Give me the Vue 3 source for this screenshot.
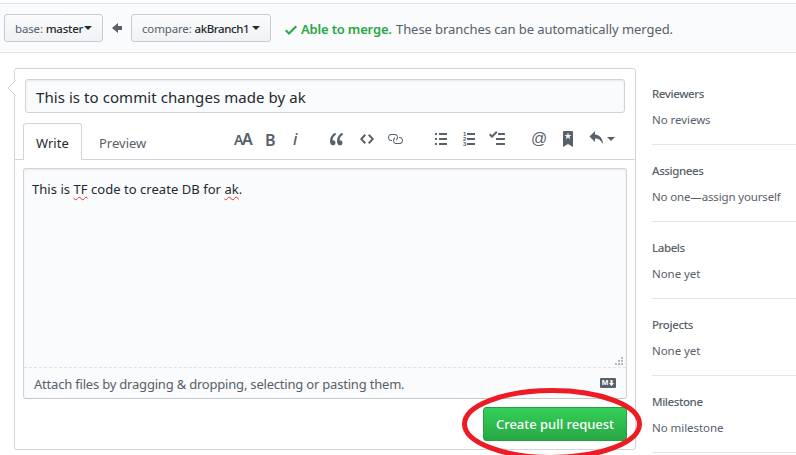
<script setup>
const sections = [
  { title: 'Reviewers', text: 'No reviews', cls: 'reviewers' },
  { title: 'Assignees', text: 'No one—assign yourself', cls: 'assignees' },
  { title: 'Labels', text: 'None yet', cls: 'labels' },
  { title: 'Projects', text: 'None yet', cls: 'projects' },
  { title: 'Milestone', text: 'No milestone', cls: 'milestone' },
]
</script>

<template>
  <div class="page">
    <header class="range">
      <button class="branch base"><span class="t">base: <b>master</b></span><i class="caret"></i></button>
      <svg class="arrow" width="10" height="16" viewBox="0 0 10 16"><path d="M6 3L0 8l6 5v-3h4V6H6V3z" /></svg>
      <button class="branch compare"><span class="t">compare: <b>akBranch1</b></span><i class="caret"></i></button>
      <svg class="check" width="12" height="16" viewBox="0 0 12 16"><path d="M12 5l-8 8-4-4 1.5-1.5L4 10l6.5-6.5L12 5z" /></svg>
      <strong class="able">Able to merge.</strong>
      <span class="these">These branches can be automatically merged.</span>
    </header>

    <div class="columns">
      <main class="card">
        <svg class="pointer" width="9" height="16" viewBox="0 0 9 16"><path class="fill" d="M9 0L1 8l8 8z" /><path class="edge" d="M8.500 .5L1 8l7.500 7.500" /></svg>
        <div class="title-input"><span>This is to commit changes made by ak</span></div>

        <div class="tabbar">
          <div class="tab active"><span>Write</span></div>
          <div class="tab"><span>Preview</span></div>
          <div class="toolbar">
            <span class="aa"><small>A</small>A</span>
            <span class="bold">B</span>
            <span class="italic">i</span>
            <svg width="14" height="16" viewBox="0 0 14 16"><path d="M6.160 3.500C3.730 5.060 2.550 6.670 2.550 9.360c.16-.05.3-.05.44-.05 1.270 0 2.500.86 2.500 2.410 0 1.610-1.030 2.610-2.500 2.610-1.900 0-2.990-1.520-2.990-4.250 0-3.800 1.750-6.530 5.020-8.420L6.160 3.500zm7 0c-2.430 1.560-3.610 3.170-3.610 5.860.16-.05.3-.05.44-.05 1.270 0 2.500.86 2.500 2.410 0 1.610-1.030 2.610-2.500 2.610-1.890 0-2.980-1.520-2.980-4.250 0-3.800 1.750-6.530 5.020-8.420l1.140 1.840h-.01z" /></svg>
            <svg width="14" height="16" viewBox="0 0 14 16"><path d="M9.500 3L8 4.500 11.500 8 8 11.500 9.500 13 14 8 9.500 3zm-5 0L0 8l4.500 5L6 11.500 2.500 8 6 4.500 4.500 3z" /></svg>
            <svg class="link" width="16" height="16" viewBox="0 0 16 16"><path d="M4 9h1v1H4c-1.500 0-3-1.690-3-3.500S2.550 3 4 3h4c1.450 0 3 1.690 3 3.500 0 1.410-.91 2.720-2 3.250V8.590c.58-.45 1-1.270 1-2.090C10 5.220 8.980 4 8 4H4c-.98 0-2 1.220-2 2.500S3 9 4 9zm9-3h-1v1h1c1 0 2 1.220 2 2.500S13.980 12 13 12H9c-.98 0-2-1.220-2-2.500 0-.83.42-1.640 1-2.090V6.250c-1.090.53-2 1.840-2 3.250C6 11.310 7.550 13 9 13h4c1.450 0 3-1.690 3-3.500S14.500 6 13 6z" /></svg>
            <svg width="12" height="16" viewBox="0 0 12 16"><path d="M0 2h2v2H0zM0 7h2v2H0zM0 12h2v2H0zM4 2h8v2H4zM4 7h8v2H4zM4 12h8v2H4z" /></svg>
            <span class="ordered">
              <span class="nums"><span>1</span><span>2</span><span>3</span></span>
              <svg width="8" height="16" viewBox="0 0 8 16"><path d="M0 2h8v2H0zM0 7h8v2H0zM0 12h8v2H0z" /></svg>
            </span>
            <svg width="16" height="16" viewBox="0 0 16 16"><path d="M15.410 9H7.590C7 9 7 8.590 7 8c0-.59 0-1 .59-1h7.810c.59 0 .59.41.59 1 0 .59 0 1-.59 1h.01zM9.590 4C9 4 9 3.590 9 3c0-.59 0-1 .59-1h5.810c.59 0 .59.41.59 1 0 .59 0 1-.59 1H9.590zM0 3.910l1.410-1.300L3 4.200 7.090 0 8.500 1.410 3 6.910l-3-3zM7.590 12h7.810c.59 0 .59.41.59 1 0 .59 0 1-.59 1H7.590C7 14 7 13.590 7 13c0-.59 0-1 .59-1z" /></svg>
            <span class="at">@</span>
            <svg width="10" height="16" viewBox="0 0 10 16"><path d="M9 0H1C.27 0 0 .27 0 1v15l5-3.090L10 16V1c0-.73-.27-1-1-1zm-.78 4.250L6.360 5.610l.72 2.160c.06.22-.02.28-.2.17L5 6.600 3.120 7.940c-.19.11-.25.05-.2-.17l.72-2.160-1.860-1.360c-.17-.16-.14-.23.09-.23l2.300-.03.7-2.160h.25l.7 2.160 2.300.03c.23 0 .27.08.09.23h.01z" /></svg>
            <svg width="14" height="16" viewBox="0 0 14 16"><path d="M6 3.500c3.920.44 8 3.125 8 10-2.312-5.062-4.750-6-8-6V11L.5 5.500 6 0v3.500z" /></svg>
            <i class="caret"></i>
          </div>
        </div>

        <div class="editor">
          <div class="text">
            <span class="body-text">This is <span class="typo">TF</span> code to create DB for <span class="typo">ak</span>.</span>
            <svg class="grip" width="9" height="9" viewBox="0 0 9 9"><path d="M6 0h2v2H6zM3 3h2v2H3zM6 3h2v2H6zM0 6h2v2H0zM3 6h2v2H3zM6 6h2v2H6z" /></svg>
          </div>
          <div class="attach">
            <span class="attach-text">Attach files by dragging &amp; dropping, selecting or pasting them.</span>
            <span class="md">M<svg width="5" height="6" viewBox="0 0 5 6"><path d="M1.500 0h2v3H5L2.500 6 0 3h1.500z" /></svg></span>
          </div>
        </div>

        <div class="actions">
          <button class="create"><span>Create pull request</span></button>
          <svg class="ring" width="182" height="74" viewBox="0 0 182 74"><ellipse cx="91" cy="37" rx="87.500" ry="33.500" /></svg>
        </div>
      </main>

      <aside class="sidebar">
        <section v-for="s in sections" :key="s.title" :class="s.cls">
          <h3><span>{{ s.title }}</span></h3>
          <p><span>{{ s.text }}</span></p>
        </section>
      </aside>
    </div>
  </div>
</template>

<style>
body { margin: 0; background: #fff; }
</style>

<style scoped>
* { box-sizing: border-box; }
.page { width: 796px; height: 455px; overflow: hidden; padding-top: 3px; font-family: "Noto Sans", "Open Sans", sans-serif; color: #24292e; font-size: 13px; white-space: nowrap; }
button { font: inherit; padding: 0; margin: 0; }
svg { display: block; flex: none; fill: #586069; }
.caret { border: 4px solid transparent; border-top-color: currentColor; border-bottom: 0; width: 8px; height: 4px; }

.range { height: 50px; border: solid #e1e4e8; border-width: 1px 0; background: #fafbfc; display: flex; align-items: center; padding: 0 0 0 4px; }
.branch { height: 28px; display: flex; align-items: center; padding-left: 10px; border: 1px solid #c8cbcf; border-radius: 3px; background: linear-gradient(#fafbfc, #eff3f6); font-size: 11.5px; color: #586069; }
.branch .t { letter-spacing: -.15px; padding-top: 1px; }
.branch b { font-weight: 500; color: #24292e; letter-spacing: -.4px; }
.base b { letter-spacing: -.25px; }
.branch .caret { color: #24292e; margin-left: auto; margin-right: 10px; }
.base { width: 99px; }
.compare { width: 140px; }
.arrow { margin: 0 9px; }
.check { margin: 3px 4px 0 14px; fill: #28a745; }
.able { font-weight: 600; font-size: 13px; color: #28a745; width: 95px; letter-spacing: -.17px; padding-top: 1px; }
.these { color: #586069; font-size: 13px; letter-spacing: -.07px; padding-top: 1px; }

.columns { display: flex; padding: 15px 0 0 14px; }
.card { width: 622px; height: 382px; border: 1px solid #d1d5da; border-radius: 3px; position: relative; padding: 10px 0 0; flex: none; }
.pointer { position: absolute; left: -8px; top: 11px; }
.pointer .fill { fill: #fff; }
.pointer .edge { fill: none; stroke: #d1d5da; }
.title-input { margin-left: 10px; width: 600px; height: 34px; border: 1px solid #d1d5da; border-radius: 3px; background: #fafbfc; box-shadow: inset 0 1px 2px rgba(27, 31, 35, .075); padding-left: 10px; font-size: 15px; line-height: 34px; letter-spacing: .07px; }

.tabbar { display: flex; height: 37px; margin-top: 10px; border-bottom: 1px solid #d1d5da; padding-left: 8px; }
.tab { width: 59px; height: 37px; line-height: 40px; padding-left: 13px; color: #586069; }
.tab.active { background: #fff; border: 1px solid #d1d5da; border-bottom: 0; border-radius: 3px 3px 0 0; color: #24292e; padding-left: 12px; line-height: 38px; }
.tab + .tab { padding-left: 17px; }
.toolbar { margin: 7px 0 0 93px; height: 16px; display: grid; grid-template-columns: 32px 27px 37px 30px 28px 47px 28px 26px 43px 31px 26px 18px 8px; align-items: center; color: #586069; line-height: 16px; }
.aa { font-size: 16px; font-weight: 600; letter-spacing: -1.400px; padding-top: 1px; }
.aa small { font-size: 14px; }
.bold { font-size: 16px; font-weight: 600; margin-left: -1px; padding-top: 1px; }
.italic { font-size: 16px; font-weight: 500; font-style: italic; }
.link { margin-left: -1px; }
.at { font-size: 16px; font-family: "Liberation Sans", sans-serif; margin-left: -1px; }
.ordered { display: flex; gap: 1px; }
.nums { width: 3px; font: 700 6px/5px "Liberation Sans", sans-serif; display: flex; flex-direction: column; padding-top: 1px; }

.editor { margin: 8px 0 0 8px; width: 604px; height: 231px; border: 1px solid #d1d5da; border-bottom-color: #c3c8cf; border-radius: 3px; background: #fafbfc; box-shadow: inset 0 1px 2px rgba(27, 31, 35, .075); }
.text { height: 198px; padding: 10px 8px 0; line-height: 20px; font-size: 13px; display: flex; justify-content: space-between; position: relative; }
.body-text { letter-spacing: .04px; }
.typo { text-decoration: underline wavy #e03030 1px; text-underline-offset: 2px; text-decoration-skip-ink: none; }
.grip { position: absolute; right: 2px; bottom: 1px; fill: #b9b9b9; }
.attach { height: 31px; border-top: 1px dashed #dfe2e5; padding: 0 10px; display: flex; align-items: center; justify-content: space-between; color: #586069; }
.attach-text { letter-spacing: -.2px; padding-top: 2px; }
.md { width: 16px; height: 10px; border-radius: 1px; background: #586069; color: #fff; display: flex; align-items: center; justify-content: center; gap: 1px; font: 700 8px/10px "Liberation Sans", sans-serif; }
.md svg { fill: #fff; }

.actions { position: relative; display: flex; justify-content: flex-end; padding: 8px 8px 0 0; }
.create { width: 144px; height: 34px; border: 1px solid #269f42; border-radius: 3px; background: linear-gradient(#34d058, #28a745); color: #fff; font-weight: 500; font-size: 13px; letter-spacing: -.02px; }
.ring { position: absolute; left: 446px; top: -12px; }
.ring ellipse { fill: none; stroke: #ed1c24; stroke-width: 5px; }

.sidebar { margin-left: 16px; flex: 1; color: #586069; font-size: 11.500px; }
.sidebar section { height: 77px; border-bottom: 1px solid #e1e4e8; padding-top: 16px; }
.sidebar h3 { margin: 0; font-size: inherit; font-weight: 500; line-height: 20px; letter-spacing: -.4px; }
.sidebar p { margin: 6px 0 0; line-height: 20px; letter-spacing: -.15px; }
.sidebar .reviewers p, .sidebar .labels p, .sidebar .projects p, .sidebar .milestone p { letter-spacing: -.05px; }
</style>
